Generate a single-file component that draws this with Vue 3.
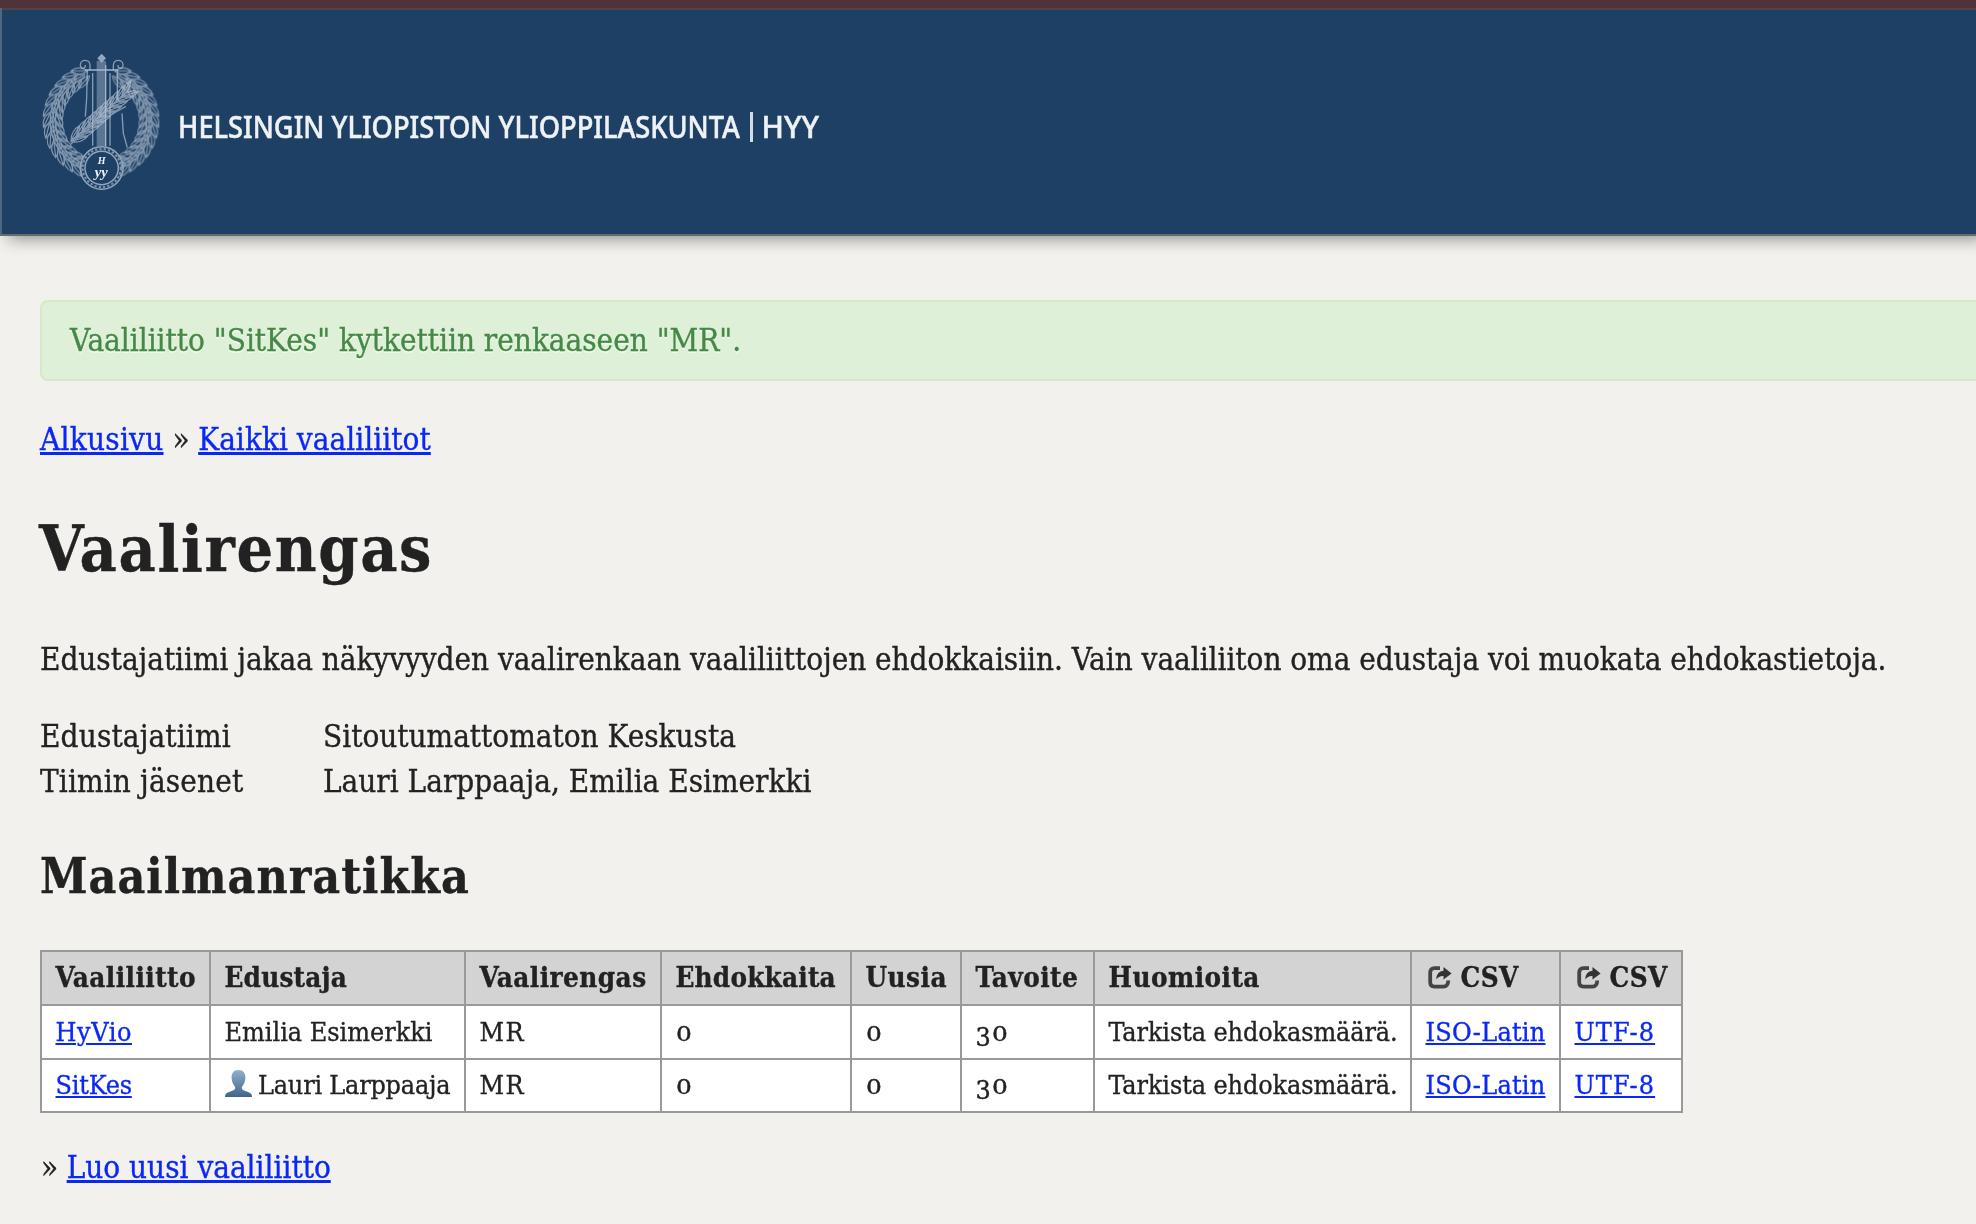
<script setup>
const columns = ['Vaaliliitto', 'Edustaja', 'Vaalirengas', 'Ehdokkaita', 'Uusia', 'Tavoite', 'Huomioita']
const alliances = [
  { name: 'HyVio', agent: 'Emilia Esimerkki', own: false },
  { name: 'SitKes', agent: 'Lauri Larppaaja', own: true },
]

// Laurel leaves laid along an arc on both sides of the crest
const laurel = []
for (const side of [-1, 1]) {
  for (let i = 0; i < 13; i++) {
    const a = ((-66 + i * 10.8) * Math.PI) / 180
    for (const [r, tilt, shift] of [[162, -24, 0], [144, 4, 0.09], [126, 24, 0]]) {
      const x = 213 + side * Math.cos(a + shift) * r
      const y = 228 + Math.sin(a + shift) * (r + 2)
      const deg = (Math.atan2(Math.cos(a), -side * Math.sin(a)) * 180) / Math.PI + side * tilt
      laurel.push(`translate(${x.toFixed(1)} ${y.toFixed(1)}) rotate(${deg.toFixed(1)})`)
    }
  }
}

// Barbs of the quill that crosses the staff
const quill = []
for (let i = 0; i < 10; i++) {
  const x = 138 + i * 17
  const y = 276 - i * 15
  quill.push(`translate(${x - 2} ${y - 12}) rotate(-60)`, `translate(${x + 10} ${y + 6}) rotate(-18)`)
}
</script>

<template>
  <div class="page">
    <header class="banner">
      <svg class="crest" viewBox="0 0 420 480">
        <g class="line">
          <path v-for="t in laurel" :key="t" :transform="t" d="M-25 0Q0 -19 25 0Q0 19 -25 0ZM-18 0H25" />
        </g>
        <g class="line frame">
          <path d="M172 76L170 160L166 215M188 84V302M240 84V302M262 76V165M276 205L280 265L292 308" />
          <path d="M180 76V62C180 40 151 42 151 60C151 74 168 72 166 60M250 76V62C250 40 279 42 279 60C279 74 262 72 264 60" />
        </g>
        <path class="staff" d="M200 48H228V304H200Z" />
        <path class="edge" d="M227 60V304M165 75H265" />
        <path class="knob" d="M202 40L215 26L228 40L215 54Z" />
        <g class="line">
          <path v-for="t in quill" :key="t" :transform="t" d="M-26 0Q0 -15 26 0Q0 15 -26 0ZM-20 0H26" />
          <path class="edge" d="M122 298L190 238L288 184" />
        </g>
        <circle class="disc" cx="215" cy="369" r="58" />
        <circle class="ring" cx="215" cy="369" r="64" />
        <circle class="ring" cx="215" cy="369" r="50" />
        <circle class="beads" cx="215" cy="369" r="57" />
        <text class="mono cap" x="215" y="357">H</text>
        <text class="mono" x="214" y="395">yy</text>
      </svg>
      <div class="brand">
        <span class="name">HELSINGIN YLIOPISTON YLIOPPILASKUNTA</span>
        <span class="bar"></span>
        <span class="abbr">HYY</span>
      </div>
    </header>

    <main>
      <div class="alert">Vaaliliitto "SitKes" kytkettiin renkaaseen "MR".</div>

      <nav class="crumbs"><a class="home" href="#">Alkusivu</a><span>»</span><a href="#">Kaikki vaaliliitot</a></nav>

      <h1>Vaalirengas</h1>
      <p>Edustajatiimi jakaa näkyvyyden vaalirenkaan vaaliliittojen ehdokkaisiin. Vain vaaliliiton oma edustaja voi muokata ehdokastietoja.</p>

      <dl>
        <dt>Edustajatiimi</dt><dd>Sitoutumattomaton Keskusta</dd>
        <dt>Tiimin jäsenet</dt><dd>Lauri Larppaaja, Emilia Esimerkki</dd>
      </dl>

      <h2>Maailmanratikka</h2>

      <table>
        <colgroup>
          <col class="w1"><col class="w2"><col class="w3"><col class="w4"><col class="w5"><col class="w6"><col class="w7"><col class="w8"><col class="w9">
        </colgroup>
        <thead>
          <tr>
            <th v-for="c in columns" :key="c">{{ c }}</th>
            <th v-for="n in 2" :key="n">
              <svg class="share" viewBox="0 0 24 23">
                <path class="box" d="M12 2.2H6.5Q2.2 2.2 2.2 6.500V16Q2.200 20.600 6.500 20.600H15.500Q20 20.600 20.300 14.500" />
                <path class="arrow" d="M15.500 1L23.600 7.400L15.500 13.600V10Q11 9.600 8.200 13.500Q8.500 5.200 15.500 4.700Z" />
              </svg>CSV
            </th>
          </tr>
        </thead>
        <tbody>
          <tr v-for="a in alliances" :key="a.name">
            <td><a href="#" :class="a.name.toLowerCase()">{{ a.name }}</a></td>
            <td :class="{ own: a.own }">
              <svg v-if="a.own" class="user" viewBox="0 0 27 27">
                <defs>
                  <linearGradient id="bust" x1="0" y1="0" x2="0" y2="1">
                    <stop offset="0" stop-color="#8fb1cd" />
                    <stop offset="1" stop-color="#41638a" />
                  </linearGradient>
                </defs>
                <path fill="url(#bust)" d="M13.500 0C18.500 0 20.600 3.500 20.400 8C20.300 12 18.600 15 16.800 17C16.500 19.500 18 20.300 21 21.200C25 22.300 27 23.500 27 27H0C0 23.500 2 22.300 6 21.200C9 20.300 10.500 19.500 10.200 17C8.400 15 6.700 12 6.600 8C6.400 3.500 8.500 0 13.500 0Z" />
              </svg>{{ a.agent }}
            </td>
            <td class="ring-code">MR</td>
            <td><span class="zero">0</span></td>
            <td><span class="zero">0</span></td>
            <td><span class="three">3</span><span class="zero">0</span></td>
            <td class="note">Tarkista ehdokasmäärä.</td>
            <td><a class="iso" href="#">ISO-Latin</a></td>
            <td><a class="utf" href="#">UTF-8</a></td>
          </tr>
        </tbody>
      </table>

      <div class="create"><span>»</span><a href="#">Luo uusi vaaliliitto</a></div>
    </main>
  </div>
</template>

<style>
body { margin: 0; background: #f2f1ed; overflow: hidden; }
</style>

<style scoped>
.page {
  width: 1976px; height: 1224px; overflow: hidden; box-sizing: border-box;
  background: #f2f1ed; color: #222;
  font: 31.15px/44px "DejaVu Serif Condensed", "DejaVu Serif", Georgia, serif;
}
a { color: #0a28f5; text-decoration: underline; text-decoration-thickness: 3px; text-underline-offset: 2px; }

.banner {
  box-sizing: border-box; height: 236px; display: flex; align-items: flex-start;
  background: #1e4065; border-top: 8px solid #50333a; border-bottom: 2px solid #6a6a68;
  box-shadow: 8px 2px 16px rgba(0, 0, 0, .45), inset 2px 0 #4d6682, inset 0 2px #504447;
}
.crest { width: 140px; height: 160px; margin: 37px 0 0 30px; }
.line { fill: none; stroke: #b4c2d3; stroke-width: 3.300; opacity: .7; }
.frame { stroke-width: 4; }
.staff { fill: #5b7594; }
.edge { fill: none; stroke: #a6b6ca; stroke-width: 4; }
.knob { fill: #94a7be; }
.disc { fill: #1e4065; }
.ring { fill: none; stroke: #93a6bd; stroke-width: 4.500; }
.beads { fill: none; stroke: #7e94ae; stroke-width: 6; stroke-dasharray: 7 6; }
.mono { fill: #eef2f6; font: italic bold 44px/1 "Liberation Serif", serif; text-anchor: middle; }
.cap { font-size: 30px; }
.brand {
  display: flex; margin: 97px 0 0 8px; color: #eef2f6; white-space: nowrap;
  font: 500 30px/44px "Noto Sans", sans-serif; -webkit-text-stroke: .5px;
}
.name { width: 572px; transform: scaleX(.908); transform-origin: 0 0; }
.bar { width: 2.500px; height: 30px; margin-top: 7px; background: #d4dbe4; }
.abbr { margin-left: 9px; }

main { padding: 64px 0 0 40px; -webkit-text-stroke: .35px; }
.alert {
  box-sizing: border-box; height: 81px; width: 2000px; padding: 16px 28px;
  border: 2px solid #d6e9c6; border-radius: 8px;
  background: #dff0d8; color: #468847; text-shadow: 0 2px 0 rgba(255, 255, 255, .5);
}
.crumbs { margin-top: 36px; display: flex; }
.crumbs span { margin: 0 8.500px 0 9px; }
.crumbs a { letter-spacing: .05px; }
.crumbs .home { letter-spacing: .26px; }
h1 { margin: 48px 0 0; font-size: 64px; line-height: 80px; letter-spacing: 1.650px; text-indent: -1px; }
p { margin: 48px 0 0; white-space: nowrap; letter-spacing: -.03px; }
dl { margin: 33px 0 0; display: grid; grid-template-columns: 283px 1fr; line-height: 45px; }
dt { letter-spacing: .15px; }
dd { margin: 0; }
h2 { margin: 42px 0 0; font-size: 47.800px; line-height: 60px; letter-spacing: 1px; }

table {
  width: 1643px; margin-top: 44px; table-layout: fixed; border-collapse: collapse;
  background: #fff; font-size: 26.700px; line-height: 50px; white-space: nowrap;
}
.w1 { width: 169px; } .w2 { width: 255px; } .w3 { width: 196px; }
.w4 { width: 190px; } .w5 { width: 110px; } .w6 { width: 133px; }
.w7 { width: 317px; } .w8 { width: 149px; } .w9 { width: 122px; }
tr { height: 54px; }
tbody tr:last-child { height: 53px; line-height: 48px; }
tbody tr:last-child td { padding-bottom: 2px; }
th, td { box-sizing: border-box; padding: 0 0 0 13.500px; border: 2px solid #999; text-align: left; }
th { background: #d3d3d3; font-size: 27.600px; letter-spacing: .45px; }
th:nth-child(2), th:nth-child(4) { letter-spacing: .2px; }
td a { text-decoration-thickness: 2px; }
.hyvio { letter-spacing: .6px; }
.sitkes, .own { letter-spacing: -.2px; }
.ring-code { letter-spacing: 1.500px; }
.note { letter-spacing: -.1px; }
.iso { letter-spacing: .25px; }
.utf { letter-spacing: 1.100px; }
.share { width: 24px; height: 23px; margin: 0 9px 0 2px; vertical-align: -2px; }
.box { fill: none; stroke: #444; stroke-width: 3.800; }
.arrow { fill: #333; }
.user { width: 27px; height: 27px; margin-right: 6.500px; vertical-align: -3px; }
.zero, .three { display: inline-block; line-height: 30px; transform-origin: 0 50%; }
.zero { font-size: 20.500px; transform: scaleX(1.350); }
.three { margin-right: 1px; transform: translateY(5px); }

.create { margin-top: 32px; display: flex; }
.create span { margin: 0 8.500px 0 1px; }
</style>
